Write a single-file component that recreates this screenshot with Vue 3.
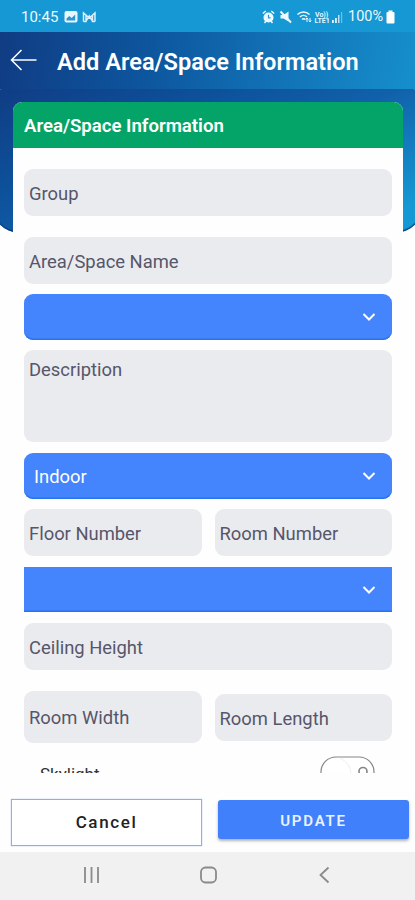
<script setup>
import { ref } from 'vue'

const area = ref('')
const placement = ref('Indoor')
const unit = ref('')
</script>

<template>
  <div class="screen">
    <div class="status">
      <span class="time">10:45</span>
      <svg class="left-icons" width="34" height="14" viewBox="0 0 34 14">
        <rect x="0.5" y="1" width="13" height="11.5" rx="2" fill="#e8f6ff" />
        <path d="M2.5 10.5V8.5l2.8-2.4 2.4 2 3.5-3.6v6z" fill="#2b98d2" />
        <path
          d="M19.5 11.5V3l5.8 5L31 3v8.5M19.5 11.5H22V5.5M31 11.5h-2.5V5.5M22 11l3.3-5 3.2 5"
          fill="none"
          stroke="#d9f0fc"
          stroke-width="1.5"
        />
      </svg>
      <svg class="right-icons" width="82" height="16" viewBox="0 0 82 16">
        <g fill="none" stroke="#eef9ff" stroke-width="1.5">
          <circle cx="6.5" cy="8.5" r="4.3" fill="#eef9ff" />
          <path d="M0.8 4.5l3-2.5M12.2 4.5l-3-2.5M2.5 14l1.5-2M10.5 14L9 12" />
          <path d="M6.5 5.8v3h2" stroke="#2797d3" stroke-width="1.2" />
          <path d="M18.5 6h3L26.5 2.5v10L21.5 9.5h-3z" fill="#eef9ff" stroke="none" />
          <path d="M18.5 2.5l10.5 11" stroke-width="1.9" />
          <path d="M35.5 5.5c3.5-3.3 8.5-3.3 12 0M38 8c2-2 5-2 7 0M40 10.5c1-1 2.3-1 3.3 0" />
          <path d="M45 13V9M43.8 10.5L45 9l1.2 1.5M48 9v4M46.9 11.5L48 13l1.2-1.5" stroke-width="1" />
        </g>
        <text x="53" y="7.5" class="tiny">Vo))</text>
        <text x="52.5" y="14" class="tiny">LTE1</text>
        <g fill="#e3f5ff">
          <rect x="70" y="11" width="1.8" height="3" />
          <rect x="73" y="9" width="1.8" height="5" />
          <rect x="76" y="6" width="1.5" height="8" opacity=".8" />
          <rect x="79" y="3" width="1.2" height="11" opacity=".45" />
        </g>
      </svg>
      <span class="percent">100%</span>
      <svg class="battery" width="9" height="14" viewBox="0 0 9 14">
        <path d="M2.5 0.5h4v1.5h1Q8.5 2 8.5 3v9.5q0 1-1 1h-6q-1 0-1-1V3q0-1 1-1h1z" fill="#fff" />
      </svg>
    </div>

    <header class="header">
      <svg class="back" width="28" height="24" viewBox="0 0 28 24">
        <path d="M26.5 12H2M11.5 2L1.5 12l10 10" fill="none" stroke="#fff" stroke-width="1.5" />
      </svg>
      <h1>Add Area/Space Information</h1>
    </header>

    <main class="body">
      <section class="card">
        <h2>Area/Space Information</h2>
        <div class="form">
          <div class="field group">Group</div>
          <div class="field name">Area/Space Name</div>
          <div class="select">
            <span>{{ area }}</span>
            <svg width="14" height="10" viewBox="0 0 14 10"><path d="M1.5 2l5.5 5.5L12.5 2" /></svg>
          </div>
          <div class="field description">Description</div>
          <div class="select">
            <span>{{ placement }}</span>
            <svg width="14" height="10" viewBox="0 0 14 10"><path d="M1.5 2l5.5 5.5L12.5 2" /></svg>
          </div>
          <div class="row">
            <div class="field">Floor Number</div>
            <div class="field">Room Number</div>
          </div>
          <div class="select square">
            <span>{{ unit }}</span>
            <svg width="14" height="10" viewBox="0 0 14 10"><path d="M1.5 2l5.5 5.5L12.5 2" /></svg>
          </div>
          <div class="field">Ceiling Height</div>
          <div class="row sizes">
            <div class="field tall">Room Width</div>
            <div class="field">Room Length</div>
          </div>
          <div class="skylight">
            <span>Skylight</span>
            <svg width="56" height="32" viewBox="0 0 56 32">
              <rect x="1" y="1" width="53" height="30" rx="15" fill="#fff" stroke="#858585" stroke-width="1.2" />
              <path d="M20 2q10 5 11 15" fill="none" stroke="#eee" />
              <circle cx="43" cy="15.5" r="4" fill="none" stroke="#858585" stroke-width="1.6" />
            </svg>
          </div>
        </div>
      </section>
    </main>

    <footer class="actions">
      <button class="cancel">Cancel</button>
      <button class="update">UPDATE</button>
    </footer>

    <nav class="navbar">
      <svg width="18" height="18" viewBox="0 0 18 18"><path d="M2 1v16M8.5 1v16M15 1v16" /></svg>
      <svg width="18" height="18" viewBox="0 0 18 18"><rect x="1" y="1.5" width="15" height="15" rx="4.5" /></svg>
      <svg width="18" height="18" viewBox="0 0 18 18"><path d="M12.5 1.5L4.5 9l8 7.5" /></svg>
    </nav>
  </div>
</template>

<style>
body {
  margin: 0;
  background: #fefefe;
}
</style>

<style scoped>
* {
  box-sizing: border-box;
}

.screen {
  width: 415px;
  height: 900px;
  display: flex;
  flex-direction: column;
  overflow: hidden;
  background: #fefefe;
  font-family: Roboto, sans-serif;
}

.status {
  height: 32px;
  flex-shrink: 0;
  display: flex;
  align-items: center;
  padding: 1px 20px 0 21px;
  background: #1598d3;
  color: #eaf8ff;
}

.time {
  width: 43px;
  font-size: 15px;
}

.right-icons {
  margin-left: auto;
  margin-right: 4px;
}

.tiny {
  font-size: 7px;
  font-weight: 700;
  fill: #e3f5ff;
}

.percent {
  width: 38px;
  font-size: 14.5px;
  line-height: 18px;
  white-space: nowrap;
}

.header {
  height: 57px;
  flex-shrink: 0;
  display: flex;
  align-items: center;
  padding: 0 10px 2px;
  background: linear-gradient(100deg, #103c83 0%, #0d559d 35%, #1270b4 65%, #168fcd 100%);
}

h1 {
  margin: 4px 0 0 19px;
  color: #fff;
  font-size: 23.6px;
  font-weight: 600;
  line-height: 28px;
  white-space: nowrap;
}

.body {
  position: relative;
  height: 684px;
  flex-shrink: 0;
  padding: 13px 12.5px 0 13px;
  overflow: hidden;
}

/* blue backdrop that the card sits on, wider than the screen so the curve is cut */
.body::before {
  content: '';
  position: absolute;
  inset: 0 -8px auto;
  height: 143.5px;
  border-radius: 10px 10px 28px 28px;
  background: linear-gradient(155deg, #103c83 0%, #0d509a 30%, #1161aa 55%, #1598d3 90%);
  box-shadow: inset 0 -1.5px 1px #0b3f83;
}

.card {
  position: relative;
  height: 800px;
  overflow: hidden;
  border-radius: 9px 9px 0 0;
  background: #fefefe;
}

h2 {
  height: 46px;
  margin: 0;
  padding: 1px 11px 0;
  background: #04a469;
  color: #fff;
  font-size: 18.6px;
  font-weight: 600;
  line-height: 46px;
}

.form {
  display: flex;
  flex-direction: column;
  gap: 10.5px;
  padding: 20.5px 10.5px 0 11px;
}

.field {
  flex: none;
  height: 47px;
  padding: 0 5px;
  border-radius: 9px;
  background: #eaebef;
  color: #56566a;
  font-size: 18.4px;
  line-height: 49px;
}

.group {
  margin-bottom: 10.5px;
}

.description {
  height: 92px;
  line-height: 39px;
}

.select {
  flex: none;
  height: 45.8px;
  display: flex;
  align-items: center;
  justify-content: space-between;
  padding: 1px 16px 0 10px;
  border-radius: 9px;
  background: #4484fc;
  box-shadow: inset 0 -1.5px 0 #2874ec;
  color: #fff;
  font-size: 18.4px;
}

.select svg path {
  fill: none;
  stroke: #fff;
  stroke-width: 2;
}

.square {
  border-radius: 0;
}

.row {
  display: grid;
  grid-template-columns: 1fr 1fr;
  align-items: center;
  gap: 13px;
}

.sizes {
  margin-top: 11px;
}

.tall {
  height: 52px;
  line-height: 54px;
}

.skylight {
  display: flex;
  justify-content: space-between;
  padding: 2px 16px 0;
  color: #333;
  font-size: 17px;
  line-height: 37px;
}

.actions {
  position: relative;
  flex: 1;
  display: flex;
  gap: 16px;
  padding: 25.5px 6px 0 11px;
  background: #fefefe;
}

button {
  width: 191px;
  padding: 0;
  font-family: inherit;
}

.cancel {
  height: 47px;
  border: 1px solid #8fb0e6;
  box-shadow: 0 0 1px #8fb0e6;
  background: #fff;
  color: #222;
  font-size: 17px;
  font-weight: 500;
  letter-spacing: 1.6px;
}

.update {
  height: 39px;
  margin-top: 1.5px;
  padding-top: 2px;
  border: 0;
  border-radius: 3px;
  background: #4081fb;
  box-shadow: 0 2px 3px rgba(0, 0, 0, 0.3);
  color: #eaf2ff;
  font-size: 15px;
  font-weight: 600;
  letter-spacing: 1.8px;
}

.navbar {
  height: 48px;
  flex-shrink: 0;
  display: flex;
  align-items: center;
  justify-content: space-between;
  padding: 0 81px 2px 83px;
  background: #f1f1f1;
}

.navbar svg {
  fill: none;
  stroke: #8a8a8a;
  stroke-width: 1.8;
}
</style>
